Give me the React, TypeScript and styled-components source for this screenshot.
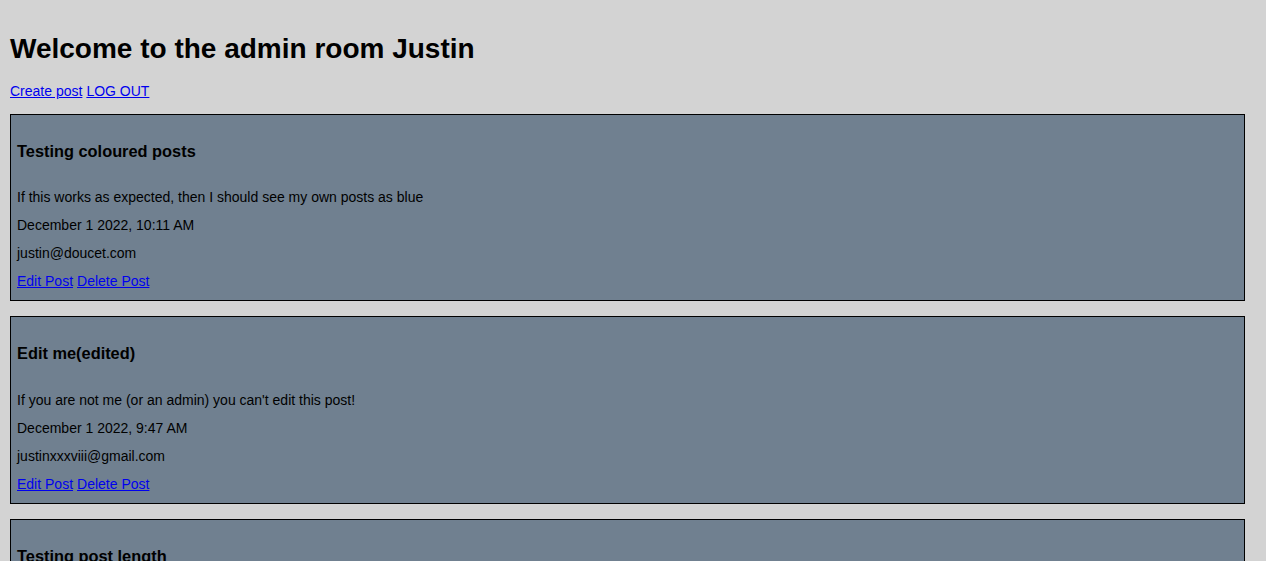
import React from "react";
import styled, { createGlobalStyle } from "styled-components";

const Global = createGlobalStyle`
  html, body {
    margin: 0;
    padding: 0;
    background: #d3d3d3;
  }
  body {
    font-family: "Liberation Sans", Arial, sans-serif;
    font-size: 14px;
    color: #000;
  }
`;

const Page = styled.div`
  display: flex;
  flex-direction: column;
  padding: 32.5px 21px 40px 10px;
`;

const Title = styled.h1`
  margin: 0;
  font-size: 28px;
  line-height: 32px;
  font-weight: bold;
`;

const Nav = styled.nav`
  display: flex;
  gap: 4px;
  margin-top: 18.5px;
  line-height: 16px;
`;

const Link = styled.a`
  color: #0000ee;
  text-decoration: underline;
  cursor: pointer;
`;

const Posts = styled.div`
  display: flex;
  flex-direction: column;
  gap: 15px;
  margin-top: 14.6px;
`;

const Card = styled.article`
  border: 1px solid #000;
  background: #708090;
  padding: 0 6px 11px;
  display: flex;
  flex-direction: column;
`;

const PostTitle = styled.h3`
  margin: 27px 0 28.5px;
  font-size: 16.38px;
  line-height: 19px;
  font-weight: bold;
`;

const Lines = styled.div`
  display: flex;
  flex-direction: column;
  gap: 12px;
`;

const Line = styled.p`
  margin: 0;
  line-height: 16px;
`;

const Actions = styled.div`
  display: flex;
  gap: 4px;
  line-height: 16px;
`;

type Post = { title: string; body: string; date: string; email: string };

const posts: Post[] = [
  {
    title: "Testing coloured posts",
    body: "If this works as expected, then I should see my own posts as blue",
    date: "December 1 2022, 10:11 AM",
    email: "justin@doucet.com",
  },
  {
    title: "Edit me(edited)",
    body: "If you are not me (or an admin) you can't edit this post!",
    date: "December 1 2022, 9:47 AM",
    email: "justinxxxviii@gmail.com",
  },
  {
    title: "Testing post length",
    body: "Testing how a longer post looks when it is displayed on the page.",
    date: "November 30 2022, 8:15 PM",
    email: "justin@doucet.com",
  },
];

export default function App() {
  return (
    <>
      <Global />
      <Page>
        <Title>Welcome to the admin room Justin</Title>
        <Nav>
          <Link>Create post</Link>
          <Link>LOG OUT</Link>
        </Nav>
        <Posts>
          {posts.map((p) => (
            <Card key={p.title}>
              <PostTitle>{p.title}</PostTitle>
              <Lines>
                <Line>{p.body}</Line>
                <Line>{p.date}</Line>
                <Line>{p.email}</Line>
                <Actions>
                  <Link>Edit Post</Link>
                  <Link>Delete Post</Link>
                </Actions>
              </Lines>
            </Card>
          ))}
        </Posts>
      </Page>
    </>
  );
}
